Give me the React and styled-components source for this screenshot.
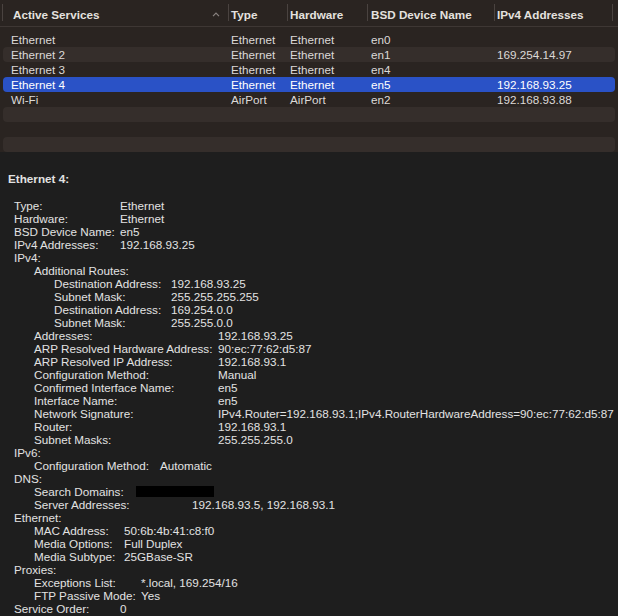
import React from "react";
import styled, { createGlobalStyle } from "styled-components";

const Global = createGlobalStyle`
  html, body { margin: 0; padding: 0; background: #1e1e1e; }
  body { font-family: "Liberation Sans", Arial, sans-serif; }
`;

const Page = styled.div`
  width: 618px;
  height: 616px;
  overflow: hidden;
  background: #1e1e1e;
  display: flex;
  flex-direction: column;
`;

const TablePane = styled.div`
  background: #2a2421;
  height: 152px;
  flex: none;
  display: flex;
  flex-direction: column;
`;

const cols = "229px 59px 80px 127px 118px 1fr";

const HeaderRow = styled.div`
  display: grid;
  grid-template-columns: ${cols};
  height: 27px;
  border-bottom: 1px solid #3e3734;
  box-sizing: content-box;
  position: relative;
  &::before {
    content: "";
    position: absolute;
    left: 2px;
    top: 4px;
    height: 17px;
    width: 1px;
    background: #4a4340;
  }
`;

const HeadCell = styled.div`
  position: relative;
  display: flex;
  align-items: center;
  padding-left: ${(p) => p.$pad}px;
  padding-top: 2px;
  font-weight: bold;
  font-size: 11.7px;
  color: #e4e1df;
  white-space: nowrap;
  &::after {
    content: "";
    position: absolute;
    right: 0;
    top: 4px;
    height: 17px;
    width: 1px;
    background: #4a4340;
  }
`;

const Caret = styled.svg`
  position: absolute;
  right: 9px;
  top: 12px;
`;

const Rows = styled.div`
  padding: 5px 3px 0;
  display: flex;
  flex-direction: column;
`;

const Row = styled.div`
  display: grid;
  grid-template-columns: 226px 59px 80px 127px 1fr;
  height: 15px;
  line-height: 15px;
  border-radius: 4px;
  font-size: 11.7px;
  color: ${(p) => (p.$selected ? "#ffffff" : "#dcd9d7")};
  background: ${(p) => (p.$selected ? "#2a52c6" : p.$striped ? "#352e2b" : "transparent")};
`;

const Cell = styled.div`
  padding-left: ${(p) => p.$pad}px;
  white-space: nowrap;
  overflow: hidden;
`;

const Details = styled.div`
  padding: 20px 0 0 8px;
  color: #e2e2e2;
  font-size: 11.7px;
`;

const Title = styled.div`
  font-weight: bold;
  line-height: 13px;
  margin-bottom: 14px;
`;

const Group = styled.div`
  display: grid;
  grid-template-columns: ${(p) => p.$key}px auto;
  padding-left: ${(p) => p.$indent}px;
  line-height: 13px;
  white-space: nowrap;
`;

const Full = styled.div`
  grid-column: 1 / -1;
`;

const Key = styled.div``;
const Val = styled.div``;

const Redacted = styled.span`
  display: inline-block;
  position: relative;
  left: -56px;
  top: 1px;
  width: 78px;
  height: 11px;
  background: #000;
`;

const services = [
  ["Ethernet", "Ethernet", "Ethernet", "en0", ""],
  ["Ethernet 2", "Ethernet", "Ethernet", "en1", "169.254.14.97"],
  ["Ethernet 3", "Ethernet", "Ethernet", "en4", ""],
  ["Ethernet 4", "Ethernet", "Ethernet", "en5", "192.168.93.25"],
  ["Wi-Fi", "AirPort", "AirPort", "en2", "192.168.93.88"],
  null,
  null,
  null,
];

const pads = [8, 2, 2, 3, 2];

const KV = ({ k, v }) => (
  <>
    <Key>{k}</Key>
    <Val>{v}</Val>
  </>
);

export default function App() {
  return (
    <>
      <Global />
      <Page>
        <TablePane>
          <HeaderRow>
            <HeadCell $pad={13}>
              Active Services
              <Caret width="8" height="5" viewBox="0 0 8 5">
                <path d="M1 4.2 L4 1.2 L7 4.2" fill="none" stroke="#8a8380" strokeWidth="1.2" />
              </Caret>
            </HeadCell>
            <HeadCell $pad={2}>Type</HeadCell>
            <HeadCell $pad={2}>Hardware</HeadCell>
            <HeadCell $pad={3}>BSD Device Name</HeadCell>
            <HeadCell $pad={2}>IPv4 Addresses</HeadCell>
          </HeaderRow>
          <Rows>
            {services.map((s, i) => (
              <Row key={i} $striped={i % 2 === 1} $selected={i === 3}>
                {s &&
                  s.map((c, j) => (
                    <Cell key={j} $pad={pads[j]}>
                      {c}
                    </Cell>
                  ))}
              </Row>
            ))}
          </Rows>
        </TablePane>
        <Details>
          <Title>Ethernet 4:</Title>
          <Group $indent={6} $key={106}>
            <KV k="Type:" v="Ethernet" />
            <KV k="Hardware:" v="Ethernet" />
            <KV k="BSD Device Name:" v="en5" />
            <KV k="IPv4 Addresses:" v="192.168.93.25" />
            <Full>IPv4:</Full>
          </Group>
          <Group $indent={26} $key={184}>
            <Full>Additional Routes:</Full>
          </Group>
          <Group $indent={46} $key={117}>
            <KV k="Destination Address:" v="192.168.93.25" />
            <KV k="Subnet Mask:" v="255.255.255.255" />
            <KV k="Destination Address:" v="169.254.0.0" />
            <KV k="Subnet Mask:" v="255.255.0.0" />
          </Group>
          <Group $indent={26} $key={184}>
            <KV k="Addresses:" v="192.168.93.25" />
            <KV k="ARP Resolved Hardware Address:" v="90:ec:77:62:d5:87" />
            <KV k="ARP Resolved IP Address:" v="192.168.93.1" />
            <KV k="Configuration Method:" v="Manual" />
            <KV k="Confirmed Interface Name:" v="en5" />
            <KV k="Interface Name:" v="en5" />
            <KV
              k="Network Signature:"
              v="IPv4.Router=192.168.93.1;IPv4.RouterHardwareAddress=90:ec:77:62:d5:87"
            />
            <KV k="Router:" v="192.168.93.1" />
            <KV k="Subnet Masks:" v="255.255.255.0" />
          </Group>
          <Group $indent={6} $key={106}>
            <Full>IPv6:</Full>
          </Group>
          <Group $indent={26} $key={126}>
            <KV k="Configuration Method:" v="Automatic" />
          </Group>
          <Group $indent={6} $key={106}>
            <Full>DNS:</Full>
          </Group>
          <Group $indent={26} $key={158}>
            <KV k="Search Domains:" v={<Redacted />} />
            <KV k="Server Addresses:" v="192.168.93.5, 192.168.93.1" />
          </Group>
          <Group $indent={6} $key={106}>
            <Full>Ethernet:</Full>
          </Group>
          <Group $indent={26} $key={90}>
            <KV k="MAC Address:" v="50:6b:4b:41:c8:f0" />
            <KV k="Media Options:" v="Full Duplex" />
            <KV k="Media Subtype:" v="25GBase-SR" />
          </Group>
          <Group $indent={6} $key={106}>
            <Full>Proxies:</Full>
          </Group>
          <Group $indent={26} $key={107}>
            <KV k="Exceptions List:" v="*.local, 169.254/16" />
            <KV k="FTP Passive Mode:" v="Yes" />
          </Group>
          <Group $indent={6} $key={106}>
            <KV k="Service Order:" v="0" />
          </Group>
        </Details>
      </Page>
    </>
  );
}
